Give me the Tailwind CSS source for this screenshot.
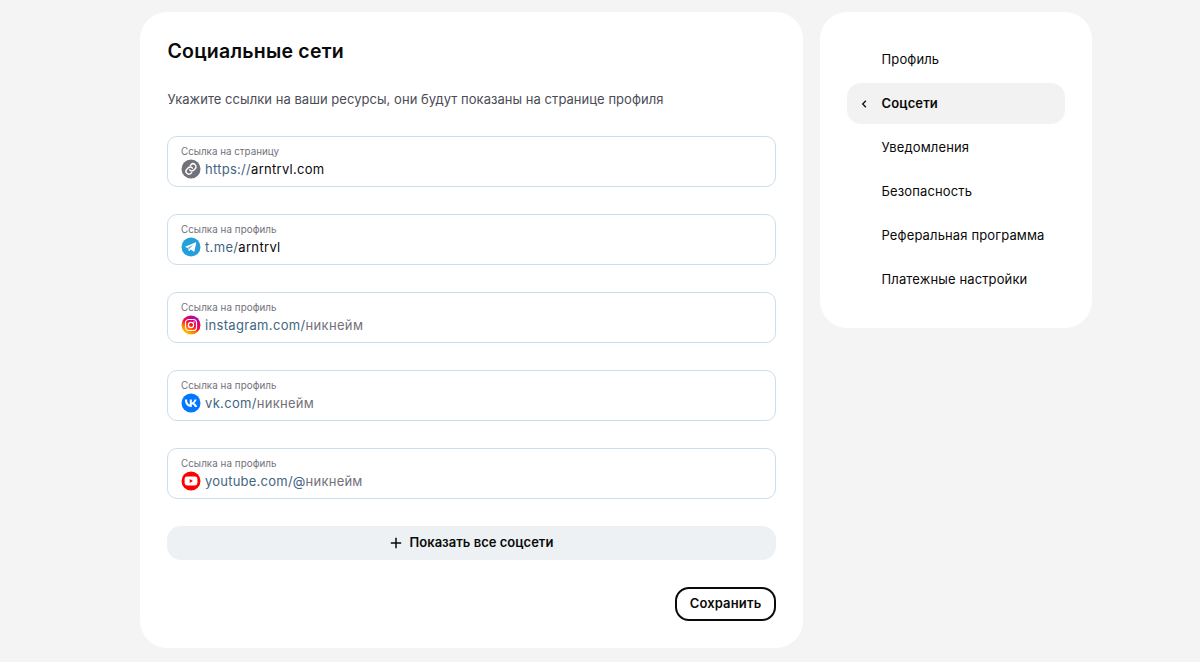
<!DOCTYPE html>
<html lang="ru">
<head>
    <meta charset="UTF-8">
    <meta name="viewport" content="width=device-width, initial-scale=1.0">
    <title>Социальные сети</title>
    <script src="https://cdn.jsdelivr.net/npm/@tailwindcss/browser@4"></script>
</head>
<body class="bg-[#f4f4f4] font-['Inter','Liberation_Sans',sans-serif] text-[#0a0a0a] h-[662px] overflow-hidden">
    <div class="flex items-start gap-[17px] pl-[140px] pt-3">
        <main class="w-[663px] h-[636px] bg-white rounded-[27px] px-[27px] pt-[26px]">
            <h1 class="pl-[0.5px] text-[19.5px] leading-[26px] font-semibold tracking-[0.23px]">Социальные сети</h1>
            <p class="mt-[25px] pl-[0.5px] text-[13px] leading-5 tracking-[0.04px] text-[#4b4b55]">Укажите ссылки на ваши ресурсы, они будут показаны на странице профиля</p>

            <form class="mt-[27px]">
                <div class="flex flex-col gap-[27px]">
                    <!-- Website -->
                    <label class="block h-[51px] border border-[#c9dfec] rounded-[10px] px-[13px] pt-2">
                        <span class="block text-[9.8px] leading-[14px] text-[#717179]">Ссылка на страницу</span>
                        <span class="flex items-center h-5 text-[13px] tracking-[0.28px]">
                            <svg class="w-5 h-5 mr-1 shrink-0" viewBox="0 0 20 20" fill="none">
                                <circle cx="10" cy="10" r="9.5" fill="#717179"/>
                                <g transform="translate(3.400 3.400) scale(.55)" stroke="#fff" stroke-width="2.600" stroke-linecap="round">
                                    <path d="M9.500 13.500a5 5 0 0 0 8 .1l2-2a5.300 5.300 0 0 0-7.500-7.500l-1.200 1.200"/>
                                    <path d="M14.500 10.500a5 5 0 0 0-8-.1l-2 2a5.300 5.300 0 0 0 7.500 7.500l1.200-1.200"/>
                                </g>
                            </svg>
                            <span class="pt-px text-[#426681]">https://</span><span class="pt-px">arntrvl.com</span>
                        </span>
                    </label>

                    <!-- Telegram -->
                    <label class="block h-[51px] border border-[#c9dfec] rounded-[10px] px-[13px] pt-2">
                        <span class="block text-[9.8px] leading-[14px] tracking-[0.06px] text-[#717179]">Ссылка на профиль</span>
                        <span class="flex items-center h-5 text-[13px] tracking-[0.33px]">
                            <svg class="w-5 h-5 mr-1 shrink-0" viewBox="0 0 20 20">
                                <circle cx="10" cy="10" r="9.5" fill="#239fdb"/>
                                <path d="M4 9.700l10.300-4.300c.6-.2 1 .1.8.8l-1.700 8c-.1.600-.5.700-1 .4l-2.700-2-1.300 1.300c-.3.300-.6.200-.7-.2l-.8-2.800-2.800-.8c-.4-.1-.5-.3-.1-.4z" fill="#fff"/>
                                <path d="M7.300 10.700l5.100-3.100-4 3.800-.3 1.700z" fill="#239fdb"/>
                            </svg>
                            <span class="pt-px text-[#426681]">t.me/</span><span class="pt-px">arntrvl</span>
                        </span>
                    </label>

                    <!-- Instagram -->
                    <label class="block h-[51px] border border-[#c9dfec] rounded-[10px] px-[13px] pt-2">
                        <span class="block text-[9.8px] leading-[14px] tracking-[0.06px] text-[#717179]">Ссылка на профиль</span>
                        <span class="flex items-center h-5 text-[13px] tracking-[0.33px]">
                            <svg class="w-5 h-5 mr-1 shrink-0" viewBox="0 0 20 20">
                                <defs>
                                    <linearGradient id="insta" x1="4" y1="18" x2="14" y2="2" gradientUnits="userSpaceOnUse">
                                        <stop offset="0" stop-color="#ffc800"/>
                                        <stop offset=".3" stop-color="#ff7a00"/>
                                        <stop offset=".55" stop-color="#f50a30"/>
                                        <stop offset="1" stop-color="#b900b4"/>
                                    </linearGradient>
                                </defs>
                                <circle cx="10" cy="10" r="9.5" fill="url(#insta)"/>
                                <g fill="none" stroke="#fff" stroke-width="1.2">
                                    <rect x="4.500" y="4.500" width="11" height="11" rx="3.300"/>
                                    <circle cx="10" cy="10" r="2.600"/>
                                </g>
                                <circle cx="13" cy="7" r=".7" fill="#fff"/>
                            </svg>
                            <span class="pt-px text-[#426681]">instagram.com/</span><span class="pt-px text-[#717179]">никнейм</span>
                        </span>
                    </label>

                    <!-- VK -->
                    <label class="block h-[51px] border border-[#c9dfec] rounded-[10px] px-[13px] pt-2">
                        <span class="block text-[9.8px] leading-[14px] tracking-[0.06px] text-[#717179]">Ссылка на профиль</span>
                        <span class="flex items-center h-5 text-[13px] tracking-[0.3px]">
                            <svg class="w-5 h-5 mr-1 shrink-0" viewBox="0 0 20 20">
                                <circle cx="10" cy="10" r="9.5" fill="#0077ff"/>
                                <path d="M10.500 13.900C6.400 13.900 4 11.100 3.900 6.400H6c.1 3.400 1.600 4.900 2.800 5.200V6.400h2v3c1.200-.1 2.400-1.500 2.800-3h2c-.3 1.800-1.600 3.100-2.600 3.700 1 .5 2.500 1.600 3.100 3.800h-2.200c-.5-1.500-1.600-2.500-3.100-2.700v2.700z" fill="#fff"/>
                            </svg>
                            <span class="pt-px text-[#426681]">vk.com/</span><span class="pt-px text-[#717179]">никнейм</span>
                        </span>
                    </label>

                    <!-- YouTube -->
                    <label class="block h-[51px] border border-[#c9dfec] rounded-[10px] px-[13px] pt-2">
                        <span class="block text-[9.8px] leading-[14px] tracking-[0.06px] text-[#717179]">Ссылка на профиль</span>
                        <span class="flex items-center h-5 text-[13px] tracking-[0.23px]">
                            <svg class="w-5 h-5 mr-1 shrink-0" viewBox="0 0 20 20">
                                <circle cx="10" cy="10" r="9.5" fill="#ff0000"/>
                                <rect x="3.600" y="5.500" width="12.800" height="9" rx="2.400" fill="#fff"/>
                                <path d="M8.700 8.100v3.800l3.200-1.900z" fill="#ff0000"/>
                            </svg>
                            <span class="pt-px text-[#426681]">youtube.com/@</span><span class="pt-px text-[#717179]">никнейм</span>
                        </span>
                    </label>
                </div>

                <button type="button" class="mt-[27px] w-full h-[34px] flex items-center justify-center gap-2 rounded-[14px] bg-[#edf1f4] text-[13px] font-semibold tracking-[0.02px]">
                    <svg class="w-3 h-3" viewBox="0 0 12 12" stroke="#0a0a0a" stroke-width="1.5"><path d="M6 .8v10.400M.8 6h10.400"/></svg>
                    <span class="pb-px">Показать все соцсети</span>
                </button>
                <div class="mt-[27px] flex justify-end">
                    <button type="button" class="w-[101px] h-[34px] rounded-[14px] border-2 border-[#0a0a0a] text-[13px] font-semibold tracking-[0.15px]">Сохранить</button>
                </div>
            </form>
        </main>

        <aside class="w-[272px] h-[315.5px] bg-white rounded-[27px] px-[27px] pt-[27px] text-[13px] tracking-[0.13px]">
            <nav class="flex flex-col gap-[3.1px]">
                <a class="flex items-center h-[41px] pl-[34.5px]">Профиль</a>
                <a class="flex items-center h-[41px] pl-[14px] rounded-[14px] bg-[#f2f2f2] font-semibold">
                    <svg class="w-[7px] h-2 mr-[13.5px]" viewBox="0 0 7 8" fill="none" stroke="#0a0a0a" stroke-width="1.300"><path d="M4.900.8L1.700 4l3.200 3.200"/></svg>
                    Соцсети
                </a>
                <a class="flex items-center h-[41px] pl-[34.5px]">Уведомления</a>
                <a class="flex items-center h-[41px] pl-[34.5px]">Безопасность</a>
                <a class="flex items-center h-[41px] pl-[34.5px]">Реферальная программа</a>
                <a class="flex items-center h-[41px] pl-[34.5px]">Платежные настройки</a>
            </nav>
        </aside>
    </div>
</body>
</html>
